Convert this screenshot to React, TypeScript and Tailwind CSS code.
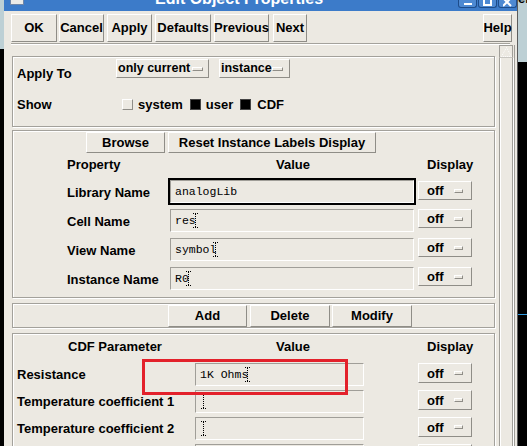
import React from 'react';

const raised = 'border border-t-white border-l-white border-r-[#8f8d87] border-b-[#8f8d87] bg-[#ece9e2]';
const sunken = 'border border-t-[#a09e98] border-l-[#a09e98] border-r-white border-b-white';
const panel = 'border border-[#a3a19b] shadow-[inset_1px_1px_0_#fff,1px_1px_0_#fff]';

const Indicator = ({ wide = false }: { wide?: boolean }) => (
  <span
    className={`block h-[4px] ${wide ? 'w-[11px]' : 'w-[9px]'} border border-t-white border-l-white border-r-[#8f8d87] border-b-[#8f8d87]`}
  />
);

// dotted I-beam text cursor
const Cursor = ({ className = '' }: { className?: string }) => (
  <svg width="5" height="15" viewBox="0 0 5 15" className={`shrink-0 ${className}`}>
    <path d="M0 0.5h5M0 14.5h5M2.5 1v13" stroke="#000" strokeWidth="1" strokeDasharray="1 1" fill="none" />
  </svg>
);

const ToolButton = ({ label, className }: { label: string; className: string }) => (
  <div className={`${raised} h-[28px] flex items-center justify-center text-[13px] font-bold ${className}`}>{label}</div>
);

const OffMenu = ({ className = '', blank = false }: { className?: string; blank?: boolean }) => (
  <div className={`${raised} w-[54px] flex items-center pl-[8px] text-[13px] font-bold leading-none ${className}`}>
    {!blank && <span>off</span>}
    {!blank && (
      <span className="ml-auto mr-[8px]">
        <Indicator />
      </span>
    )}
  </div>
);

const Field = ({ value, cursor, focused, width }: { value?: string; cursor?: boolean; focused?: boolean; width: string }) => (
  <div
    className={`${sunken} ${width} h-[23px] flex items-center pl-[4px] font-['Liberation_Mono',monospace] font-normal text-[11.5px] leading-none ${focused ? 'shadow-[0_0_0_2px_#000]' : ''}`}
  >
    {value && <span className="whitespace-pre">{value}</span>}
    {cursor && <Cursor className={value ? '-ml-[3px]' : 'ml-[1px]'} />}
  </div>
);

export default function App() {
  const props = [
    { label: 'Library Name', value: 'analogLib', focused: true },
    { label: 'Cell Name', value: 'res', cursor: true },
    { label: 'View Name', value: 'symbol', cursor: true },
    { label: 'Instance Name', value: 'R0', cursor: true },
  ];
  const cdf = [
    { label: 'Resistance', value: '1K Ohms', cursor: true },
    { label: 'Temperature coefficient 1', value: '', cursor: true },
    { label: 'Temperature coefficient 2', value: '', cursor: true },
  ];

  return (
    <div className="relative w-[527px] h-[446px] overflow-hidden flex font-['Liberation_Sans',Arial,sans-serif] text-black bg-black">
      {/* background desktop, left */}
      <div className="w-[4px] flex flex-col shrink-0">
        <div className="h-[49px] bg-[#bdd0d5]" />
        <div className="flex-1 bg-black" />
      </div>

      {/* dialog */}
      <div className="w-[514px] shrink-0 flex flex-col bg-[#ece9e2] border-r border-r-[#5c5c5c]">
        {/* title bar */}
        <div className="h-[11px] shrink-0 bg-[#3c7bc9] flex items-start overflow-hidden">
          <div className="ml-[6px] w-[14px] h-[5px] shrink-0 bg-[#ecebe8] border-x border-b border-[#6f86a8]" />
          <div className="ml-[131px] -mt-[9px] text-[16px] leading-[16px] font-bold text-white whitespace-nowrap">
            Edit Object Properties
          </div>
          <div className="ml-auto flex gap-[1px]">
            <div className="w-[19px] h-[8px] rounded-b-[3px] border-x border-b border-[#1d4c8a] bg-[#4d89d2] flex items-end justify-center">
              <span className="block w-[8px] h-[2px] mb-[2px] bg-white" />
            </div>
            <div className="w-[19px] h-[8px] rounded-b-[3px] border-x border-b border-[#1d4c8a] bg-[#4d89d2] flex items-end justify-center">
              <span className="block w-[9px] h-[6px] mb-[1px] border-x-2 border-b-2 border-white" />
            </div>
            <div className="w-[19px] h-[8px] rounded-b-[3px] border-x border-b border-[#1d4c8a] bg-[#4d89d2] flex items-end justify-center">
              <svg width="9" height="7" viewBox="0 0 9 7">
                <path d="M0 -2L8 6M8 -2L0 6" stroke="#fff" strokeWidth="2" fill="none" />
              </svg>
            </div>
          </div>
        </div>

        {/* toolbar */}
        <div className="h-[32px] shrink-0 flex items-start pt-[3px] pl-[7px]">
          <ToolButton label="OK" className="w-[46px]" />
          <ToolButton label="Cancel" className="ml-[2px] w-[45px]" />
          <ToolButton label="Apply" className="ml-[3px] w-[45px]" />
          <ToolButton label="Defaults" className="ml-[3px] w-[56px]" />
          <ToolButton label="Previous" className="ml-[3px] w-[55px]" />
          <ToolButton label="Next" className="ml-[4px] w-[34px]" />
          <ToolButton label="Help" className="ml-auto mr-[5px] w-[29px]" />
        </div>
        <div className="mx-[7px] h-[2px] shrink-0 border-t border-t-[#a4a29c] border-b border-b-white" />

        {/* scrolled form */}
        <div className="flex flex-1 min-h-0 pl-[8px]">
          <div className="w-[483px] shrink-0 flex flex-col pt-[11px]">
            {/* apply to / show */}
            <div className={`${panel} h-[71px] shrink-0 pl-[4px] text-[13px] font-bold`}>
              <div className="flex items-start pt-[2px]">
                <div className="w-[99px] mt-[7px] leading-[16px]">Apply To</div>
                <div className={`${raised} w-[93px] h-[19px] flex items-center pl-[1px] leading-none text-[12.5px] whitespace-nowrap`}>
                  <span>only current</span>
                  <span className="ml-auto mr-[5px]">
                    <Indicator wide />
                  </span>
                </div>
                <div className={`${raised} ml-[10px] w-[71px] h-[19px] flex items-center pl-[1px] leading-none text-[12.5px] whitespace-nowrap`}>
                  <span>instance</span>
                  <span className="ml-auto mr-[7px]">
                    <Indicator wide />
                  </span>
                </div>
              </div>
              <div className="flex items-center h-[16px] mt-[14px] leading-none">
                <div className="w-[105px]">Show</div>
                <span className={`${raised} block w-[11px] h-[11px]`} />
                <span className="ml-[5px]">system</span>
                <span className="ml-[7px] block w-[11px] h-[11px] bg-black border border-[#444]" />
                <span className="ml-[5px]">user</span>
                <span className="ml-[7px] block w-[11px] h-[11px] bg-black border border-[#444]" />
                <span className="ml-[6px]">CDF</span>
              </div>
            </div>

            {/* instance properties */}
            <div className={`${panel} mt-[3px] h-[168px] shrink-0 text-[13px] font-bold`}>
              <div className="flex mt-[1px] h-[21px]">
                <div className={`${raised} ml-[73px] w-[79px] flex items-center justify-center`}>Browse</div>
                <div className={`${raised} ml-[3px] w-[208px] flex items-center justify-center`}>
                  Reset Instance Labels Display
                </div>
              </div>
              <div className="flex items-center h-[24px]">
                <div className="ml-[54px] w-[209px]">Property</div>
                <div className="w-[151px]">Value</div>
                <div>Display</div>
              </div>
              <div className="mt-[3px]">
                {props.map((p) => (
                  <div key={p.label} className="flex items-start h-[29px]">
                    <div className="pl-[54px] w-[157px] h-[23px] pt-[2px] flex items-center">{p.label}</div>
                    <Field width="w-[244px]" value={p.value} cursor={p.cursor} focused={p.focused} />
                    <OffMenu className={`ml-[4px] h-[19px] ${p.focused ? 'mt-[1px]' : ''}`} />
                  </div>
                ))}
              </div>
            </div>

            {/* add / delete / modify */}
            <div className={`${panel} mt-[5px] h-[25px] shrink-0 flex items-start pt-[1px] text-[13px] font-bold`}>
              <div className={`${raised} ml-[155px] w-[79px] h-[22px] flex items-center justify-center`}>Add</div>
              <div className={`${raised} ml-[3px] w-[80px] h-[22px] flex items-center justify-center`}>Delete</div>
              <div className={`${raised} ml-[2px] w-[80px] h-[22px] flex items-center justify-center`}>Modify</div>
            </div>

            {/* CDF parameters */}
            <div className={`${panel} mt-[5px] h-[160px] shrink-0 text-[13px] font-bold`}>
              <div className="flex items-center h-[26px]">
                <div className="ml-[55px] w-[208px]">CDF Parameter</div>
                <div className="w-[151px]">Value</div>
                <div>Display</div>
              </div>
              <div className="mt-[3px]">
                {cdf.map((c) => (
                  <div key={c.label} className="flex items-start h-[27px]">
                    <div className="pl-[4px] w-[182px] h-[23px] pt-[1px] flex items-center whitespace-nowrap">{c.label}</div>
                    <Field width="w-[169px]" value={c.value} cursor={c.cursor} />
                    <OffMenu className="ml-[54px] h-[20px]" />
                  </div>
                ))}
                {/* next row, mostly below the fold */}
                <div className="flex items-start h-[27px]">
                  <div className="w-[182px]" />
                  <Field width="w-[169px]" />
                  <OffMenu className="ml-[54px] h-[20px]" blank />
                </div>
              </div>
            </div>
          </div>

          {/* scrollbar */}
          <div className="ml-[4px] w-[14px] shrink-0 flex flex-col">
            <div className="h-[13px] shrink-0 border border-[#a09e98] border-b-[#c9c7c1] flex items-center justify-center">
              <svg width="11" height="10" viewBox="0 0 11 10">
                <path d="M5.5 0.5L10.5 9.5H0.5Z" stroke="#fff" strokeWidth="1" strokeDasharray="1 1" fill="none" />
              </svg>
            </div>
            <div className="flex-1 border-x border-x-[#a09e98] shadow-[inset_1px_0_0_#fff,1px_0_0_#fff]" />
          </div>
          <div className="ml-[1px] w-[2px] shrink-0 border-l border-l-[#a09e98]" />
        </div>
      </div>

      {/* background desktop, right */}
      <div className="w-[9px] shrink-0 flex flex-col">
        <div className="h-[62px] bg-[#bdd0d5] overflow-hidden">
          <div className="-mt-[8px] text-[13px] leading-[13px] font-bold">er</div>
        </div>
        <div className="flex-1 bg-black">
          <div className="mt-[252px] h-[1px] bg-[#2f9be0]" />
        </div>
      </div>

      {/* annotation */}
      <div className="absolute left-[142px] top-[359px] w-[206px] h-[36px] border-[3px] border-[#e3212b]" />
    </div>
  );
}
